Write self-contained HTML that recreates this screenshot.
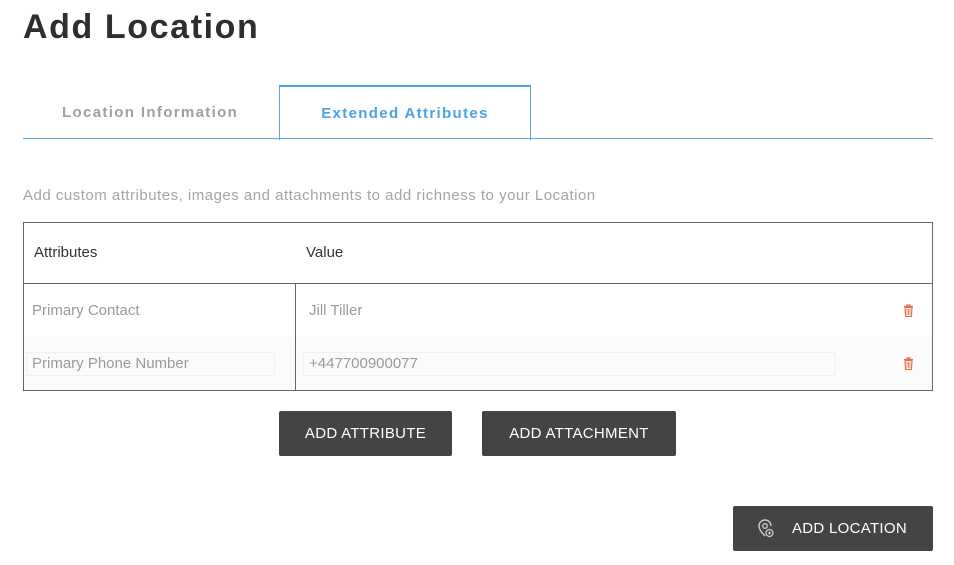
<!DOCTYPE html>
<html><head><style>
body{margin:0;width:954px;height:565px;background:#fff;font-family:"Liberation Sans",sans-serif;position:relative;overflow:hidden}
.a{position:absolute}
h1{position:absolute;left:23px;top:8px;margin:0;font-size:34px;font-weight:bold;color:#2e2e2e;letter-spacing:1.6px}
.btn{position:absolute;background:#444;color:#fff;font-size:15px;border-radius:2px;display:flex;align-items:center;justify-content:center;letter-spacing:0.3px}
.cell{position:absolute;font-size:15px;color:#9a9a9a}
</style></head><body>
<h1>Add Location</h1>
<div class="a" style="left:279px;top:85px;width:250px;height:53px;border:1px solid #5aa8e0;border-top:2px solid #4aa3e6;border-bottom:none;background:#fff"></div>
<div class="a" style="left:23px;top:138px;width:910px;height:1px;background:#5aa8e0"></div>
<div class="a" style="left:62px;top:104px;font-size:15px;font-weight:bold;color:#a0a0a0;letter-spacing:1.35px">Location Information</div>
<div class="a" style="left:280px;top:105px;width:250px;text-align:center;font-size:15px;font-weight:bold;color:#4aa3e6;letter-spacing:1.35px">Extended Attributes</div>
<div class="a" style="left:23px;top:187px;font-size:15px;color:#a5a5a5;letter-spacing:0.5px">Add custom attributes, images and attachments to add richness to your Location</div>
<div class="a" style="left:23px;top:222px;width:908px;height:167px;border:1px solid #666"></div>
<div class="a" style="left:24px;top:283px;width:908px;height:1px;background:#666"></div>
<div class="a" style="left:24px;top:337px;width:908px;height:52px;background:#fbfbfb"></div>
<div class="a" style="left:295px;top:284px;width:1px;height:106px;background:#666"></div>
<div class="cell" style="left:34px;top:244px;color:#333">Attributes</div>
<div class="cell" style="left:306px;top:244px;color:#333">Value</div>
<div class="cell" style="left:32px;top:302px">Primary Contact</div>
<div class="cell" style="left:309px;top:302px">Jill Tiller</div>
<div class="a" style="left:26px;top:352px;width:247px;height:22px;border:1px solid #f0f0f0"></div>
<div class="a" style="left:303px;top:352px;width:531px;height:22px;border:1px solid #f0f0f0"></div>
<div class="cell" style="left:32px;top:355px">Primary Phone Number</div>
<div class="cell" style="left:309px;top:355px">+447700900077</div>
<svg class="a" style="left:903px;top:304px" width="11" height="13" viewBox="0 0 11 13"><path d="M1 2.5h9M4 2.5V1h3v1.5M2 3.5h7l-.6 9H2.6z" fill="none" stroke="#e87050" stroke-width="1.2"/><path d="M4 5v6M5.5 5v6M7 5v6" stroke="#e87050" stroke-width=".8"/></svg>
<svg class="a" style="left:903px;top:357px" width="11" height="13" viewBox="0 0 11 13"><path d="M1 2.5h9M4 2.5V1h3v1.5M2 3.5h7l-.6 9H2.6z" fill="none" stroke="#e87050" stroke-width="1.2"/><path d="M4 5v6M5.5 5v6M7 5v6" stroke="#e87050" stroke-width=".8"/></svg>
<div class="btn" style="left:279px;top:411px;width:173px;height:45px">ADD ATTRIBUTE</div>
<div class="btn" style="left:482px;top:411px;width:194px;height:45px">ADD ATTACHMENT</div>
<div class="btn" style="left:733px;top:506px;width:200px;height:45px;justify-content:flex-start">
<svg style="margin-left:24px;margin-right:17px" width="18" height="20" viewBox="0 0 18 20"><path d="M8 17C4 13 2 10 2 7a6 6 0 0 1 12 0" fill="none" stroke="#ccc" stroke-width="1.4"/><circle cx="8" cy="7" r="2.3" fill="none" stroke="#ccc" stroke-width="1.3"/><circle cx="12.5" cy="14" r="3.5" fill="none" stroke="#ccc" stroke-width="1.3"/><path d="M11 14h3M12.5 12.5v3" stroke="#ccc" stroke-width="1.1"/></svg>ADD LOCATION</div>
</body></html>
